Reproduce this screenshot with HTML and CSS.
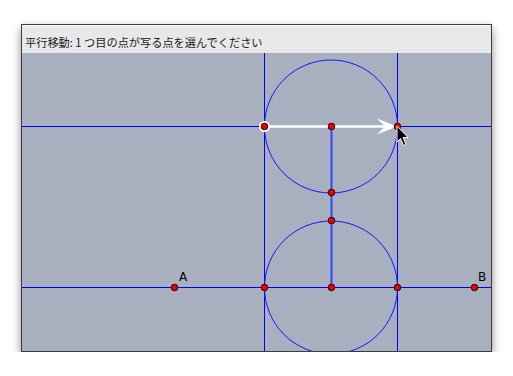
FILE: index.html
```html
<!DOCTYPE html>
<html lang="ja">
<head>
<meta charset="utf-8">
<link rel="stylesheet" href="styles.css">
</head>
<body>
<div class="window">
  <div class="titlebar">
    <span class="prompt">平行移動: 1 つ目の点が写る点を選んでください</span>
  </div>
  <div class="canvas">
    <svg width="469" height="298" viewBox="0 0 469 298" xmlns="http://www.w3.org/2000/svg">
      <g stroke="#0000ff" stroke-width="1" fill="none" shape-rendering="crispEdges">
        <line x1="0" y1="73.5" x2="469" y2="73.5"/>
        <line x1="0" y1="234.5" x2="469" y2="234.5"/>
        <line x1="242.5" y1="0" x2="242.5" y2="298"/>
        <line x1="375.5" y1="0" x2="375.5" y2="298"/>
      </g>
      <g stroke="#1414ff" stroke-width="1" fill="none">
        <circle cx="309" cy="73.5" r="66.5"/>
        <circle cx="309" cy="234.5" r="66.5"/>
      </g>
      <line x1="309.5" y1="73" x2="309.5" y2="234" stroke="#3344ff" stroke-width="2"/>
      <line x1="242" y1="73.5" x2="365" y2="73.5" stroke="#ffffff" stroke-width="2.5"/>
      <polygon points="375,73.5 355,65.5 363,73.5 355,81.5" fill="#ffffff"/>
      <g fill="#ee0000" stroke="#200000" stroke-width="1">
        <circle cx="242.5" cy="73.5" r="5.5" fill="#ffffff" stroke="none"/>
        <circle cx="242.5" cy="73.5" r="3.3"/>
        <circle cx="309.5" cy="73.5" r="3.3"/>
        <circle cx="375.5" cy="73.5" r="3.3"/>
        <circle cx="309.5" cy="139.5" r="3.3"/>
        <circle cx="309.5" cy="167.5" r="3.3"/>
        <circle cx="152.5" cy="234.5" r="3.3"/>
        <circle cx="242.5" cy="234.5" r="3.3"/>
        <circle cx="309.5" cy="234.5" r="3.3"/>
        <circle cx="375.5" cy="234.5" r="3.3"/>
        <circle cx="452.5" cy="234.5" r="3.3"/>
      </g>
      <text x="157" y="228" class="label">A</text>
      <text x="456" y="228" class="label">B</text>
      <path d="M375 73 L375 89 L378.5 85.5 L381.5 92.5 L384 91.5 L381 84.5 L386 84.5 Z" fill="#000" stroke="#fff" stroke-width="1" stroke-linejoin="round"/>
    </svg>
  </div>
</div>
</body>
</html>
```

FILE: styles.css
```css
html, body {
  margin: 0;
  padding: 0;
  background: #ffffff;
}
body {
  padding: 24px 0 0 21px;
  font-family: "Noto Sans CJK JP", "Noto Sans", sans-serif;
}
.window {
  width: 469px;
  border: 1px solid #3c3c3c;
  box-shadow: 0 4px 9px rgba(0, 0, 0, 0.45);
  background: #a8b0bf;
}
.titlebar {
  height: 28px;
  background: #e8e8e8;
  border-top: 1px solid #fafafa;
  box-sizing: border-box;
  display: flex;
  align-items: center;
  padding: 4px 0 0 3px;
}
.prompt {
  font-size: 11.2px;
  color: #1a1a1a;
}
.canvas {
  height: 298px;
  line-height: 0;
}
.canvas svg {
  display: block;
}
.label {
  font-family: "DejaVu Sans", sans-serif;
  font-size: 12px;
  fill: #000;
}
```
